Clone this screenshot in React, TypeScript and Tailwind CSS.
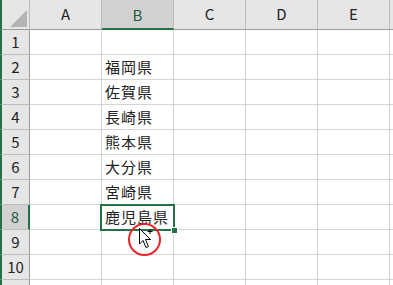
const cols = ['A', 'B', 'C', 'D', 'E'];
const data: Record<number, string> = {
  2: '福岡県',
  3: '佐賀県',
  4: '長崎県',
  5: '熊本県',
  6: '大分県',
  7: '宮崎県',
  8: '鹿児島県',
};
const rows = [1, 2, 3, 4, 5, 6, 7, 8, 9, 10, 11];

export default function App() {
  return (
    <div
      className="relative h-[285px] w-[393px] overflow-hidden bg-white text-[#222]"
      style={{ fontFamily: '"Noto Sans CJK JP", "Noto Sans", sans-serif' }}
    >
      {/* header row */}
      <div className="flex h-[30px]">
        <div className="relative h-[30px] w-[30px] shrink-0 border-b border-r border-l-2 border-b-[#9b9b9b] border-r-[#bdbdbd] border-l-[#217346] bg-[#e6e6e6]">
          <svg className="absolute left-[8px] top-[10px]" width="17" height="17" viewBox="0 0 17 17">
            <polygon points="17,0 17,17 0,17" fill="#b4b4b4" />
          </svg>
        </div>
        {cols.map((c) => (
          <div
            key={c}
            className={
              c === 'B'
                ? 'flex h-[30px] w-[72px] shrink-0 items-center justify-center border-r border-b-2 border-r-[#bdbdbd] border-b-[#217346] bg-[#d2d2d2] pt-[2px] text-[15px] text-[#1e5c3a]'
                : 'flex h-[30px] w-[72px] shrink-0 items-center justify-center border-r border-b border-r-[#bdbdbd] border-b-[#9b9b9b] bg-[#e6e6e6] text-[15px]'
            }
          >
            {c}
          </div>
        ))}
        <div className="h-[30px] flex-1 border-b border-b-[#9b9b9b] bg-[#e6e6e6]" />
      </div>

      {/* body rows */}
      {rows.map((r) => (
        <div key={r} className="flex h-[25px]">
          <div
            className={
              r === 8
                ? 'flex h-[25px] w-[30px] shrink-0 items-center justify-center border-b border-r-2 border-l-2 border-b-[#bdbdbd] border-r-[#217346] border-l-[#217346] bg-[#d2d2d2] text-[15px] text-[#1e5c3a]'
                : 'flex h-[25px] w-[30px] shrink-0 items-center justify-center border-b border-r border-l-2 border-b-[#bdbdbd] border-r-[#9b9b9b] border-l-[#217346] bg-[#e6e6e6] text-[15px]'
            }
          >
            {r <= 10 ? r : ''}
          </div>
          {cols.map((c) => (
            <div
              key={c}
              className="flex h-[25px] w-[72px] shrink-0 items-end border-b border-r border-[#d4d4d4] pb-[2px] pl-[3px] text-[15px] leading-[20px] tracking-[1px] text-[#222]"
            >
              {c === 'B' ? data[r] ?? '' : ''}
            </div>
          ))}
          <div className="h-[25px] flex-1 border-b border-[#d4d4d4]" />
        </div>
      ))}

      {/* selected cell B8 */}
      <div className="absolute left-[100px] top-[204px] h-[27px] w-[75px] border-2 border-[#217346]" />
      <div className="absolute left-[171px] top-[227px] h-[7px] w-[7px] border border-white bg-[#217346]" />

      {/* highlight circle + cursor */}
      <div className="absolute left-[128px] top-[223px] h-[33px] w-[33px] rounded-full border-2 border-[#e8262a]" />
      <svg className="absolute left-[138px] top-[227px]" width="20" height="24" viewBox="0 0 20 24">
        <path
          d="M1.5 1.5 L1.5 17 L5 13.5 L8 20.5 L10.5 19.5 L7.5 12.5 L12.5 12.5 Z"
          fill="white"
          stroke="black"
          strokeWidth="1"
          strokeLinejoin="miter"
        />
        <path d="M12 2 L12 7 M9.5 4.5 L14.5 4.5" stroke="black" strokeWidth="1" />
      </svg>
    </div>
  );
}
